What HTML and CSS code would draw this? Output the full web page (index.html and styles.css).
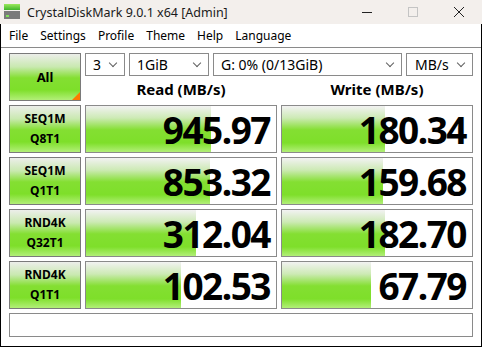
FILE: index.html
```html
<!DOCTYPE html>
<html lang="en">
<head>
    <meta charset="UTF-8">
    <title>CrystalDiskMark 9.0.1 x64 [Admin]</title>
    <link rel="stylesheet" href="styles.css">
</head>
<body>
    <div class="titlebar">
        <svg class="app-icon" width="16" height="15" viewBox="0 0 16 15">
            <defs>
                <linearGradient id="ig" x1="0" y1="0" x2="0" y2="1">
                    <stop offset="0" stop-color="#9be85c"/>
                    <stop offset="1" stop-color="#3fb52a"/>
                </linearGradient>
            </defs>
            <rect x="0" y="0" width="16" height="6" fill="url(#ig)"/>
            <rect x="0" y="7" width="16" height="8" fill="#7a7a7a"/>
            <rect x="2" y="11" width="3" height="2" fill="#7fe05a"/>
        </svg>
        <span class="title">CrystalDiskMark 9.0.1 x64 [Admin]</span>
        <div class="controls">
            <svg width="46" height="24" viewBox="0 0 46 24"><path d="M18 12.5h10" stroke="#222" stroke-width="1"/></svg>
            <svg width="46" height="24" viewBox="0 0 46 24"><rect x="18.5" y="7.5" width="9" height="9" fill="none" stroke="#c4c4c4"/></svg>
            <svg width="46" height="24" viewBox="0 0 46 24"><path d="M18 7l10 10M28 7L18 17" stroke="#222" stroke-width="1"/></svg>
        </div>
    </div>

    <div class="window">
        <div class="menubar">
            <span>File</span>
            <span>Settings</span>
            <span>Profile</span>
            <span>Theme</span>
            <span>Help</span>
            <span>Language</span>
        </div>

        <div class="main">
            <div class="grid">
                <div class="test-btn all">All<span class="corner"></span></div>
                <div class="top">
                    <div class="combos">
                        <div class="combo w-count">3<i class="chev"></i></div>
                        <div class="combo w-size">1GiB<i class="chev"></i></div>
                        <div class="combo w-drive">G: 0% (0/13GiB)<i class="chev"></i></div>
                        <div class="combo w-unit">MB/s<i class="chev"></i></div>
                    </div>
                    <div class="heads">
                        <div>Read (MB/s)</div>
                        <div>Write (MB/s)</div>
                    </div>
                </div>

                <div class="test-btn">SEQ1M<br>Q8T1</div>
                <div class="cell"><div class="bar" style="width: 66%"></div><span>945.97</span></div>
                <div class="cell"><div class="bar" style="width: 54%"></div><span>180.34</span></div>

                <div class="test-btn">SEQ1M<br>Q1T1</div>
                <div class="cell"><div class="bar" style="width: 65%"></div><span>853.32</span></div>
                <div class="cell"><div class="bar" style="width: 53%"></div><span>159.68</span></div>

                <div class="test-btn">RND4K<br>Q32T1</div>
                <div class="cell"><div class="bar" style="width: 58%"></div><span>312.04</span></div>
                <div class="cell"><div class="bar" style="width: 54%"></div><span>182.70</span></div>

                <div class="test-btn">RND4K<br>Q1T1</div>
                <div class="cell"><div class="bar" style="width: 50%"></div><span>102.53</span></div>
                <div class="cell"><div class="bar" style="width: 47%"></div><span>67.79</span></div>
            </div>
            <div class="comment"></div>
        </div>
    </div>
</body>
</html>
```

FILE: styles.css
```css
body {
    margin: 0;
    width: 482px;
    height: 347px;
    overflow: hidden;
    font-family: 'Noto Sans', 'Open Sans', sans-serif;
    color: #000;
    background: #fff;
}
.titlebar {
    height: 24px;
    background: #f3efec;
    display: flex;
    align-items: center;
}
.app-icon {
    margin-left: 4px;
    margin-top: -2px;
}
.title {
    margin-left: 7px;
    font-size: 12.5px;
    color: #1a1a1a;
}
.controls {
    margin-left: auto;
    display: flex;
}
.window {
    height: 323px;
    box-sizing: border-box;
    border: 1px solid #000;
    border-top: none;
}
.menubar {
    height: 23px;
    border-bottom: 1px solid #8a8a8a;
    display: flex;
    align-items: center;
    font-size: 12px;
    padding-left: 8px;
    gap: 12px;
}
.main {
    padding: 5px 0 0 8px;
}
.grid {
    display: grid;
    grid-template-columns: 72px 192px 192px;
    grid-auto-rows: 48px;
    gap: 4px;
}
.test-btn {
    position: relative;
    box-sizing: border-box;
    border: 1px solid #7a7a7a;
    background: linear-gradient(to bottom, #eceeea 0%, #c9e9b0 28%, #84df32 52%, #7edf2a 78%, #b2ef78 100%);
    display: flex;
    align-items: center;
    justify-content: center;
    text-align: center;
    font-size: 12px;
    font-weight: bold;
    line-height: 20px;
}
.test-btn.all {
    font-size: 13px;
}
.corner {
    position: absolute;
    right: 0;
    bottom: 0;
    width: 0;
    height: 0;
    border-left: 8px solid transparent;
    border-bottom: 8px solid #ff7a00;
}
.top {
    grid-column: 2 / 4;
    display: flex;
    flex-direction: column;
}
.combos {
    display: flex;
    gap: 4px;
    height: 23px;
}
.combo {
    position: relative;
    box-sizing: border-box;
    border: 1px solid #8a8a8a;
    background: #fff;
    font-size: 14px;
    line-height: 21px;
    padding-left: 7px;
}
.w-count { width: 40px; }
.w-size { width: 80px; }
.w-drive { width: 189px; }
.w-unit { width: 67px; padding-left: 8px; }
.chev {
    position: absolute;
    right: 8px;
    top: 6px;
    width: 5px;
    height: 5px;
    border-right: 1px solid #606060;
    border-bottom: 1px solid #606060;
    transform: rotate(45deg);
}
.heads {
    display: grid;
    grid-template-columns: 192px 192px;
    gap: 4px;
    flex: 1;
    align-items: center;
    text-align: center;
    font-size: 15px;
    font-weight: bold;
}
.cell {
    position: relative;
    box-sizing: border-box;
    border: 1px solid #8a8a8a;
    background: #fff;
    display: flex;
    align-items: center;
    justify-content: flex-end;
    overflow: hidden;
}
.bar {
    position: absolute;
    left: 0;
    top: 0;
    bottom: 0;
    background: linear-gradient(to bottom, #f2f2f2 0%, #cdeab5 26%, #84df32 52%, #7edf2a 80%, #b2ef78 100%);
}
.cell span {
    position: relative;
    font-size: 37px;
    font-weight: bold;
    letter-spacing: -1.5px;
    padding-right: 6px;
    line-height: 1;
}
.comment {
    margin-top: 4px;
    width: 464px;
    height: 24px;
    box-sizing: border-box;
    border: 1px solid #8a8a8a;
}
```
